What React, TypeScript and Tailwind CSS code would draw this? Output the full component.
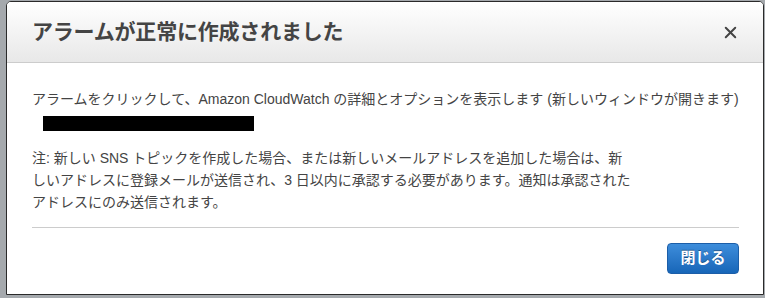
import { X } from "lucide-react";

const font = { fontFamily: '"Liberation Sans", "Noto Sans CJK JP", sans-serif' };

export default function App() {
  return (
    <div
      className="flex h-[298px] w-[765px] overflow-hidden bg-[#a5a9ad] pl-[6px] pt-[1px]"
      style={font}
    >
      <div className="flex h-[294px] w-[758px] flex-col overflow-hidden rounded-t-[5px] border border-[#2a2a2a] bg-white">
        {/* header */}
        <div className="flex h-[61px] shrink-0 items-center justify-between border-b border-[#cccccc] bg-gradient-to-b from-white to-[#e8e8e8] pl-[25px] pr-[23px]">
          <h1 className="text-[21px] font-bold tracking-[-0.2px] text-[#444]">
            アラームが正常に作成されました
          </h1>
          <X size={19} strokeWidth={2.5} className="text-[#444]" />
        </div>

        {/* body */}
        <div className="flex flex-1 flex-col pl-[25px] pr-[24px] pt-[25px]">
          <p className="whitespace-nowrap text-[14px] leading-[22px] text-[#444]">
            アラームをクリックして、Amazon CloudWatch の詳細とオプションを表示します (新しいウィンドウが開きます)
          </p>
          <div className="ml-[11px] mt-[6px] h-[15px] w-[211px] bg-black" />
          <p className="mt-[16px] text-[14px] leading-[22px] text-[#444]">
            <span className="block whitespace-nowrap">
              注: 新しい SNS トピックを作成した場合、または新しいメールアドレスを追加した場合は、新
            </span>
            <span className="block whitespace-nowrap">
              しいアドレスに登録メールが送信され、3 日以内に承認する必要があります。通知は承認された
            </span>
            <span className="block whitespace-nowrap">アドレスにのみ送信されます。</span>
          </p>
          <div className="mt-[14px] h-px w-full bg-[#cccccc]" />
          <div className="flex justify-end pt-[15px]">
            <button
              type="button"
              className="h-[31px] w-[72px] rounded-[4px] border border-[#1c5ea8] bg-gradient-to-b from-[#3d8ddb] to-[#1766b8] text-[15px] font-bold text-white [text-shadow:0_-1px_0_rgba(0,0,0,0.35)]"
            >
              閉じる
            </button>
          </div>
        </div>
      </div>
    </div>
  );
}
